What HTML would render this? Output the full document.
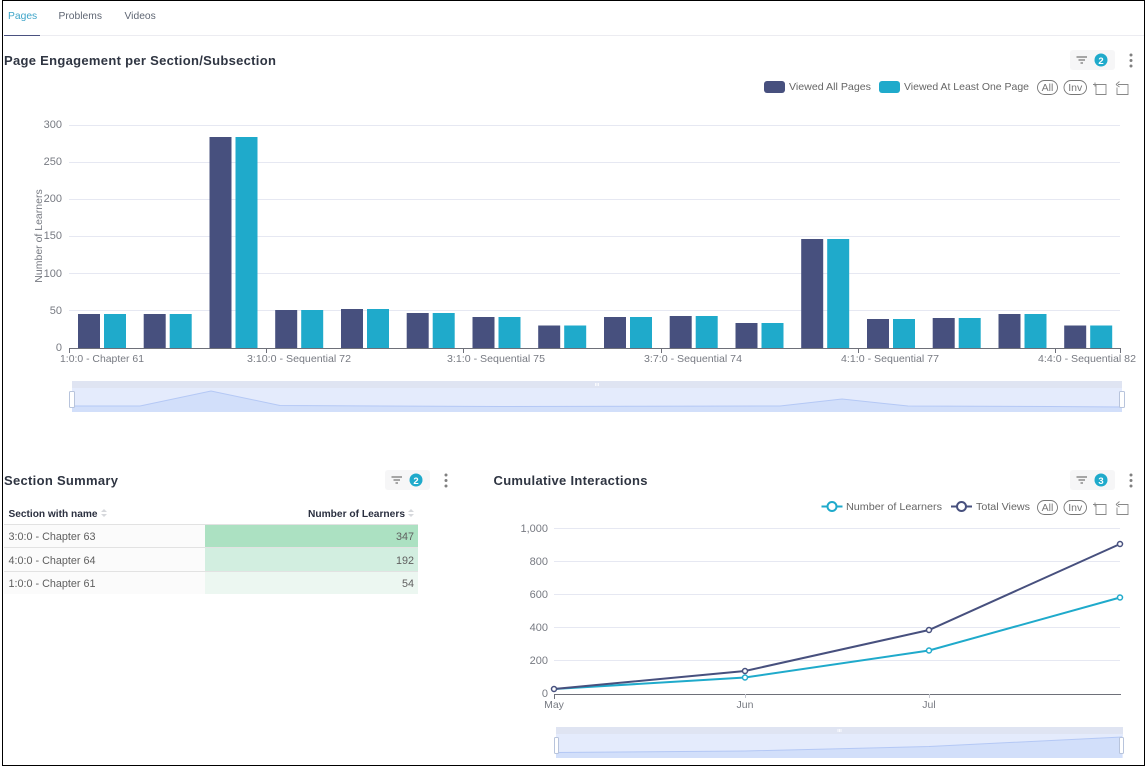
<!DOCTYPE html>
<html>
<head>
<meta charset="utf-8">
<style>
html,body{margin:0;padding:0;background:#fff}
body{width:1146px;height:766px;overflow:hidden;position:relative}
svg{position:absolute;left:0;top:0}
text{font-family:"Liberation Sans","Noto Sans CJK SC",sans-serif}
.ax{font-size:11px;fill:#777a82}
.axl{font-size:10.500px;fill:#777a82}
.lg{font-size:10.500px;fill:#666}
.h{font-size:13px;font-weight:bold;fill:#2f3542;letter-spacing:.3px}
.tab{font-size:10.300px;fill:#5f6673}
.th{font-size:10.200px;font-weight:bold;fill:#2b3040}
.td{font-size:10.800px;fill:#606060}
.b{font-size:9.500px;font-weight:bold;fill:#fff}
.pill{fill:none;stroke:#777;stroke-width:.9}
.pt{font-size:10.500px;fill:#777}
.ic{fill:none;stroke:#888;stroke-width:.9}
</style>
</head>
<body>
<svg width="1146" height="766" viewBox="0 0 1146 766" xmlns="http://www.w3.org/2000/svg">
<defs>
<g id="flt"><rect x="0" y="0" width="45" height="20" rx="3" fill="#f6f6f7"/>
<path d="M6.500 7h10.500M8.500 10h6.500M10.500 13h2.500" stroke="#555" stroke-width="1.100" fill="none"/>
<circle cx="31" cy="10" r="6.500" fill="#1faacb"/></g>
<g id="dots"><circle cx="0" cy="0" r="1.500" fill="#808080"/><circle cx="0" cy="5.500" r="1.500" fill="#808080"/><circle cx="0" cy="11" r="1.500" fill="#808080"/></g>
<g id="ctl">
<rect x="0.500" y="0.500" width="20" height="14" rx="7" class="pill"/>
<text x="10.500" y="11" text-anchor="middle" class="pt">All</text>
<rect x="27" y="0.500" width="22.500" height="14" rx="7" class="pill"/>
<text x="38.200" y="11" text-anchor="middle" class="pt">Inv</text>
<path class="ic" d="M58 4.500h11v10h-10v-10M56 4.500h4M58 2.500v4"/>
<path class="ic" d="M81 4.500h10v10h-11v-7M79 4.500l3.500-3M79 4.500l3.500 2.500"/>
</g>
</defs>

<!-- frame -->
<rect x="2.500" y="0.500" width="1142" height="765" fill="none" stroke="#000" stroke-width="1"/>

<!-- tabs -->
<text x="8" y="19" class="tab" style="fill:#3ea5c9">Pages</text>
<text x="58.500" y="19" class="tab">Problems</text>
<text x="124.500" y="19" class="tab">Videos</text>
<rect x="4" y="35" width="1140" height="1" fill="#ececf1"/>
<rect x="4" y="35" width="36" height="1" fill="#4a5180"/>

<!-- top header -->
<text x="4" y="65" class="h">Page Engagement per Section/Subsection</text>
<use href="#flt" x="1070" y="50"/>
<text x="1101" y="64" text-anchor="middle" class="b">2</text>
<use href="#dots" x="1131" y="55"/>

<!-- top legend -->
<rect x="764" y="81" width="21" height="12" rx="3" fill="#47507e"/>
<text x="789" y="90" class="lg" textLength="82" lengthAdjust="spacingAndGlyphs">Viewed All Pages</text>
<rect x="879" y="81" width="21" height="12" rx="3" fill="#1faacb"/>
<text x="904" y="90" class="lg" textLength="125" lengthAdjust="spacingAndGlyphs">Viewed At Least One Page</text>
<use href="#ctl" x="1037" y="80"/>

<!-- top chart grid -->
<g stroke="#e6e8f2" stroke-width="1">
<path d="M69 125.500H1120M69 162.500H1120M69 199.500H1120M69 236.500H1120M69 273.500H1120M69 310.500H1120"/>
</g>
<g class="ax" text-anchor="end">
<text x="62" y="128">300</text><text x="62" y="165">250</text><text x="62" y="202">200</text><text x="62" y="239">150</text><text x="62" y="277">100</text><text x="62" y="314">50</text><text x="62" y="351">0</text>
</g>
<text transform="translate(42,236) rotate(-90)" text-anchor="middle" class="axl">Number of Learners</text>

<!-- bars -->
<g fill="#47507e">
<rect x="78" y="314" width="22" height="34"/><rect x="143.700" y="314" width="22" height="34"/><rect x="209.500" y="137" width="22" height="211"/><rect x="275.200" y="310" width="22" height="38"/><rect x="341" y="309" width="22" height="39"/><rect x="406.700" y="313" width="22" height="35"/><rect x="472.500" y="317" width="22" height="31"/><rect x="538.200" y="325.500" width="22" height="22.500"/><rect x="604" y="317" width="22" height="31"/><rect x="669.700" y="316" width="22" height="32"/><rect x="735.500" y="323" width="22" height="25"/><rect x="801.200" y="239" width="22" height="109"/><rect x="867" y="319" width="22" height="29"/><rect x="932.700" y="318" width="22" height="30"/><rect x="998.500" y="314" width="22" height="34"/><rect x="1064.200" y="325.500" width="22" height="22.500"/>
</g>
<g fill="#1faacb">
<rect x="104" y="314" width="22" height="34"/><rect x="169.700" y="314" width="22" height="34"/><rect x="235.500" y="137" width="22" height="211"/><rect x="301.200" y="310" width="22" height="38"/><rect x="367" y="309" width="22" height="39"/><rect x="432.700" y="313" width="22" height="35"/><rect x="498.500" y="317" width="22" height="31"/><rect x="564.200" y="325.500" width="22" height="22.500"/><rect x="630" y="317" width="22" height="31"/><rect x="695.700" y="316" width="22" height="32"/><rect x="761.500" y="323" width="22" height="25"/><rect x="827.200" y="239" width="22" height="109"/><rect x="893" y="319" width="22" height="29"/><rect x="958.700" y="318" width="22" height="30"/><rect x="1024.500" y="314" width="22" height="34"/><rect x="1090.200" y="325.500" width="22" height="22.500"/>
</g>

<!-- x axis -->
<path d="M69 348.500H1121" stroke="#6e7079" stroke-width="1"/>
<path d="M69.500 348v5M266.500 348v5M463.500 348v5M661.500 348v5M858.500 348v5M1055.500 348v5M1120.500 348v5" stroke="#6e7079" stroke-width="1"/>
<g class="axl" text-anchor="middle">
<text x="102" y="362" textLength="84" lengthAdjust="spacingAndGlyphs">1:0:0 - Chapter 61</text>
<text x="299" y="362" textLength="104" lengthAdjust="spacingAndGlyphs">3:10:0 - Sequential 72</text>
<text x="496" y="362" textLength="98" lengthAdjust="spacingAndGlyphs">3:1:0 - Sequential 75</text>
<text x="693" y="362" textLength="98" lengthAdjust="spacingAndGlyphs">3:7:0 - Sequential 74</text>
<text x="890" y="362" textLength="98" lengthAdjust="spacingAndGlyphs">4:1:0 - Sequential 77</text>
<text x="1087" y="362" textLength="98" lengthAdjust="spacingAndGlyphs">4:4:0 - Sequential 82</text>
</g>

<!-- top data zoom -->
<rect x="72" y="381" width="1050" height="7" fill="#dfe4f2"/>
<rect x="72" y="388" width="1050" height="24" fill="#e4ebfc"/>
<path d="M72 406L140 406L211 391L280 405.500L500 406.500L780 406L842 399L908 406L1050 406.500L1122 407V412H72Z" fill="#d2dffa"/>
<path d="M72 406L140 406L211 391L280 405.500L500 406.500L780 406L842 399L908 406L1050 406.500L1122 407" fill="none" stroke="#b4c8f5" stroke-width="1"/>
<rect x="69.500" y="391.500" width="5" height="16" rx="1" fill="#fff" stroke="#b8c4dc"/>
<rect x="1119.500" y="391.500" width="5" height="16" rx="1" fill="#fff" stroke="#b8c4dc"/>
<path d="M595.500 383v3M597 383v3M598.500 383v3" stroke="#fff" stroke-width=".8"/>

<!-- section summary -->
<text x="4" y="485" class="h">Section Summary</text>
<use href="#flt" x="385" y="470"/>
<text x="416" y="484" text-anchor="middle" class="b">2</text>
<use href="#dots" x="446" y="475"/>

<text x="8.500" y="517" class="th" textLength="89" lengthAdjust="spacingAndGlyphs">Section with name</text>
<path d="M104 509l3 3h-6zM104 517l3-3h-6z" fill="#d6d8dc"/>
<text x="308" y="517" class="th" textLength="97" lengthAdjust="spacingAndGlyphs">Number of Learners</text>
<path d="M411 509l3 3h-6zM411 517l3-3h-6z" fill="#d6d8dc"/>

<rect x="4" y="525" width="201" height="69" fill="#fbfbfb"/>
<rect x="205" y="525" width="213" height="22" fill="#ace1c2"/>
<rect x="205" y="548" width="213" height="23" fill="#d2eee0"/>
<rect x="205" y="572" width="213" height="22" fill="#ecf7f1"/>
<rect x="4" y="524" width="414" height="1" fill="#e2e2e2"/>
<rect x="4" y="547" width="414" height="1" fill="#e2e2e2"/>
<rect x="4" y="571" width="414" height="1" fill="#e2e2e2"/>
<g class="td">
<text x="8.500" y="540">3:0:0 - Chapter 63</text>
<text x="8.500" y="564">4:0:0 - Chapter 64</text>
<text x="8.500" y="587">1:0:0 - Chapter 61</text>
<text x="414" y="540" text-anchor="end">347</text>
<text x="414" y="564" text-anchor="end">192</text>
<text x="414" y="587" text-anchor="end">54</text>
</g>

<!-- cumulative -->
<text x="493.500" y="485" class="h">Cumulative Interactions</text>
<use href="#flt" x="1070" y="470"/>
<text x="1101" y="484" text-anchor="middle" class="b">3</text>
<use href="#dots" x="1131" y="475"/>

<path d="M821.500 506.500h21" stroke="#1faacb" stroke-width="2"/>
<circle cx="832" cy="506.500" r="4.500" fill="#fff" stroke="#1faacb" stroke-width="2"/>
<text x="846" y="510" class="lg" textLength="96" lengthAdjust="spacingAndGlyphs">Number of Learners</text>
<path d="M951 506.500h21" stroke="#47507e" stroke-width="2"/>
<circle cx="961.500" cy="506.500" r="4.500" fill="#fff" stroke="#47507e" stroke-width="2"/>
<text x="976" y="510" class="lg" textLength="54" lengthAdjust="spacingAndGlyphs">Total Views</text>
<use href="#ctl" x="1037" y="500"/>

<path d="M554 528.500H1120M554 561.500H1120M554 594.500H1120M554 627.500H1120M554 660.500H1120" stroke="#e6e8f2" stroke-width="1"/>
<g class="ax" text-anchor="end">
<text x="548" y="532">1,000</text><text x="548" y="565">800</text><text x="548" y="598">600</text><text x="548" y="631">400</text><text x="548" y="664">200</text><text x="548" y="697">0</text>
</g>
<path d="M554 694.500H1121" stroke="#6e7079" stroke-width="1"/>
<path d="M554.500 694v5" stroke="#6e7079" stroke-width="1"/>
<path d="M745.500 694v4" stroke="#c5c7cf" stroke-width="1"/>
<path d="M929.500 694v4" stroke="#c5c7cf" stroke-width="1"/>
<g class="axl" text-anchor="middle">
<text x="554" y="708">May</text><text x="745" y="708">Jun</text><text x="929" y="708">Jul</text>
</g>

<polyline points="554,689 745,677.500 929,650.500 1120,597.500" fill="none" stroke="#1faacb" stroke-width="2"/>
<polyline points="554,689 745,671 929,630 1120,544" fill="none" stroke="#47507e" stroke-width="2"/>
<g fill="#fff" stroke="#1faacb" stroke-width="1.500">
<circle cx="745" cy="677.500" r="2.500"/><circle cx="929" cy="650.500" r="2.500"/><circle cx="1120" cy="597.500" r="2.500"/>
</g>
<g fill="#fff" stroke="#47507e" stroke-width="1.500">
<circle cx="554" cy="689" r="2.500"/><circle cx="745" cy="671" r="2.500"/><circle cx="929" cy="630" r="2.500"/><circle cx="1120" cy="544" r="2.500"/>
</g>

<!-- bottom data zoom -->
<rect x="556" y="727" width="567" height="7" fill="#dfe4f2"/>
<rect x="556" y="734" width="567" height="24" fill="#e4ebfc"/>
<path d="M556 752.500L745 751L929 746.500L1122 737V758H556Z" fill="#d2dffa"/>
<path d="M556 752.500L745 751L929 746.500L1122 737" fill="none" stroke="#b4c8f5" stroke-width="1"/>
<rect x="554.500" y="737.500" width="4" height="16" rx="1" fill="#fff" stroke="#b8c4dc"/>
<rect x="1119.500" y="737.500" width="4" height="16" rx="1" fill="#fff" stroke="#b8c4dc"/>
<path d="M838 729v3M839.500 729v3M841 729v3" stroke="#fff" stroke-width=".8"/>
</svg>
</body>
</html>
